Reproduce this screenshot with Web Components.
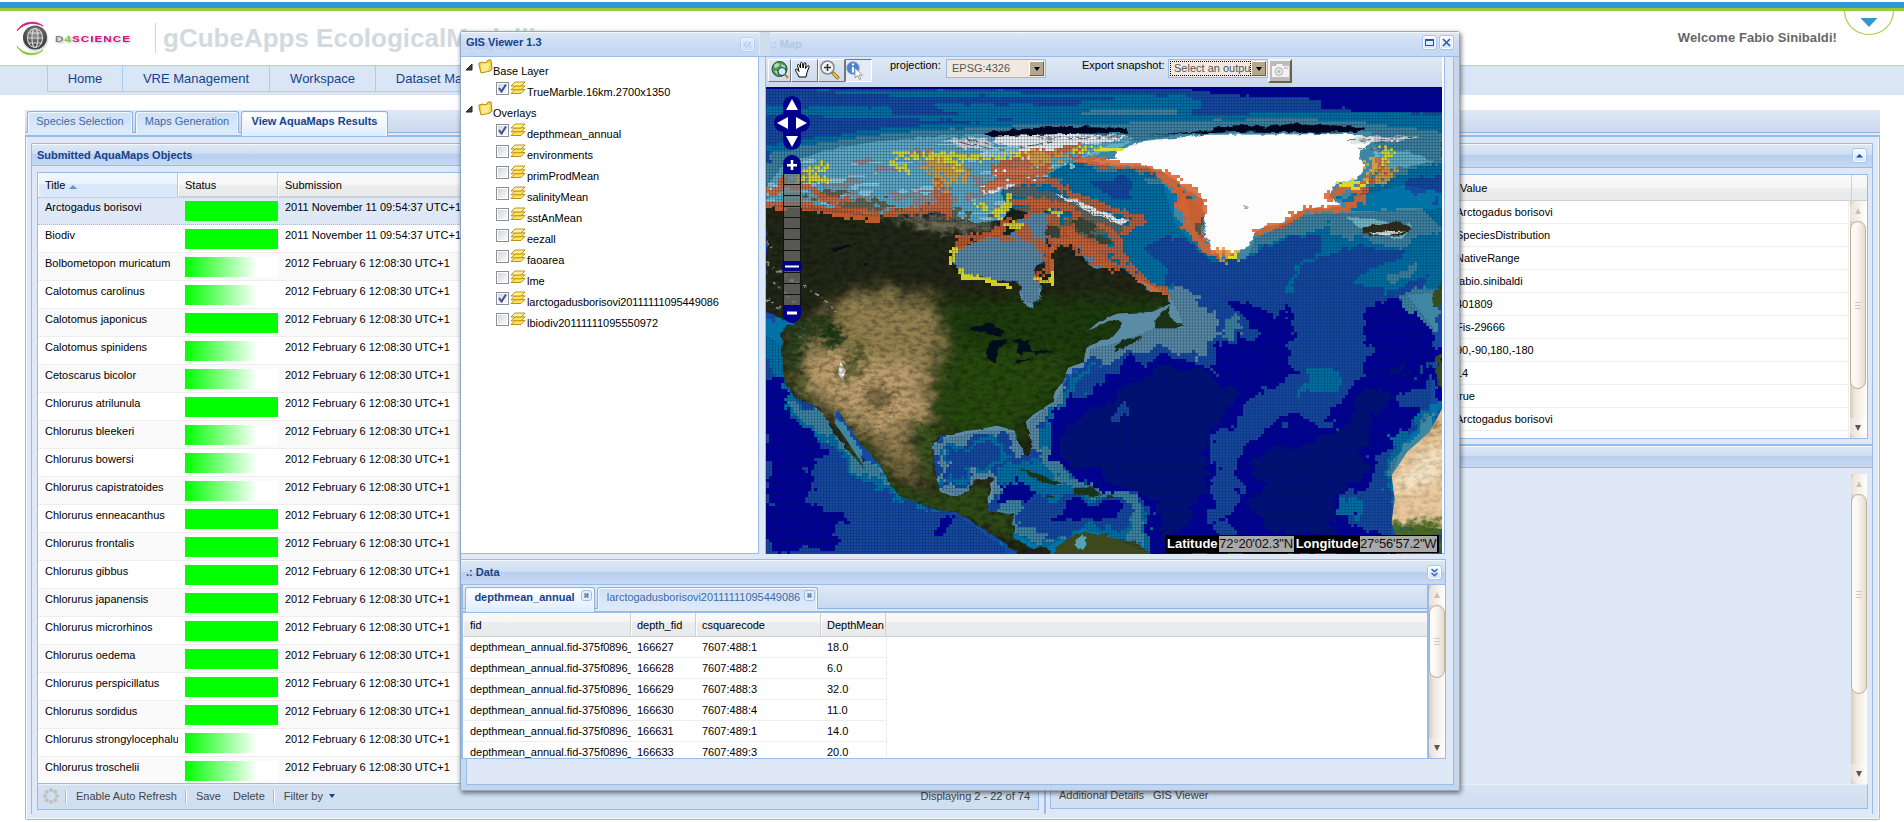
<!DOCTYPE html>
<html lang="en">
<head>
<meta charset="utf-8">
<title>gCubeApps EcologicalModelling</title>
<style>
html,body{margin:0;padding:0;background:#fff;font:11px "Liberation Sans",Arial,sans-serif;color:#000}
</style>
</head>
<body>
<eco-page></eco-page>
<script>
const BASE = `*{box-sizing:border-box}:host{display:block;box-sizing:border-box}`;
function define(name, css, html) {
  customElements.define(name, class extends HTMLElement {
    connectedCallback() {
      if (this.shadowRoot) return;
      const root = this.attachShadow({mode: 'open'});
      root.innerHTML = `<style>${BASE}${css}</style>${typeof html === 'function' ? html(this) : html}`;
    }
  });
}

/* ---------- small pieces ---------- */
define('x-scroll', `
:host{display:flex;flex-direction:column;width:16px;background:linear-gradient(90deg,#d9cdb9,#efe9df 35%,#fdfcfb);overflow:hidden;flex:none}
.b{height:20px;flex:none;border-radius:8px 8px 0 0;background:linear-gradient(90deg,#e9e1d6,#fff);color:#cfc2b0;display:flex;align-items:center;justify-content:center}
.b.d{margin-top:auto;border-radius:0 0 8px 8px;color:#5c5850}
.t{flex:none;border:1px solid #c0b098;border-radius:8px;background:linear-gradient(90deg,#fdfbf8,#fbf8f4 35%,#e6ddcf);display:flex;flex-direction:column;gap:2px;align-items:center;justify-content:center}
.t i{width:6px;height:1px;background:#d5c9b4}`,
el => `<div class="b"><svg width="6" height="6"><path d="M3 0L6 6H0z" fill="currentColor"/></svg></div>
<div class="t" style="height:${el.getAttribute('thumb')}px"><i></i><i></i><i></i></div>
<div class="b d"><svg width="6" height="6"><path d="M0 0H6L3 6z" fill="currentColor"/></svg></div>`);

define('x-tool', `
:host{width:15px;height:15px;border:1px solid #a5c6f0;border-radius:3px;background:linear-gradient(#fff,#e4f0ff 45%,#cfe4ff);box-shadow:inset 0 0 0 1px #fff;flex:none}
svg{display:block}`,
el => ({
  up: `<svg width="13" height="13"><path d="M3 8.5L6.5 5 10 8.5z" fill="#1b4aa0"/></svg>`,
  max: `<svg width="13" height="13"><rect x="2.5" y="3.5" width="8" height="6" fill="none" stroke="#2a52ae"/><path d="M2 4h9" stroke="#2a52ae" stroke-width="2"/></svg>`,
  close: `<svg width="13" height="13"><path d="M3 3l7 7M10 3l-7 7" stroke="#2a52ae" stroke-width="1.5"/></svg>`,
  down: `<svg width="13" height="13"><path d="M3.5 3l3 2.7 3-2.7M3.5 7l3 2.7 3-2.7" stroke="#3a6cb4" stroke-width="1.6" fill="none"/></svg>`,
  left: `<svg width="13" height="13"><path d="M6 3.5l-3 3 3 3M10 3.5l-3 3 3 3" stroke="#9dbbe4" stroke-width="1.4" fill="none"/></svg>`
})[el.getAttribute('kind')]);

define('x-tab', `
:host{height:22px;border:1px solid #8db2e3;border-bottom:0;border-radius:3px 3px 0 0;background:linear-gradient(#cfe0f6,#dceafb);color:#416aa3;display:flex;justify-content:center;line-height:18px;position:relative;box-shadow:inset 1px 1px #f2f8ff,inset -1px 0 #f2f8ff;flex:none}
:host([active]){background:linear-gradient(#fff,#f4f9ff 35%,#deecfd);color:#15428b;font-weight:bold;height:25px;margin-bottom:-3px}
svg{position:absolute;right:2px;top:2px}`,
el => `<slot></slot>${el.hasAttribute('closable') ? `<svg width="11" height="11"><rect x=".5" y=".5" width="10" height="10" rx="2.5" fill="#e6f0fc" stroke="#9dbbe4"/><path d="M3.500 3.500l4 4M7.500 3.500l-4 4" stroke="#6888b6" stroke-width="2"/></svg>` : ''}`);

define('x-header', `
:host{display:flex;align-items:center;padding:0 4px 0 5px;font-weight:bold;color:#15428b;background:linear-gradient(#dfe9f6,#cdddf1 49%,#b8cfee 50%,#c7d9f3);border-bottom:1px solid #99bbe8;box-shadow:inset 0 1px #f4f9ff;flex:none}
::slotted(x-tool){margin-left:auto}`, `<slot></slot>`);

/* ---------- top bar ---------- */
define('eco-top', `
:host{height:65px;border-top:2px solid #fff;display:flex;flex-direction:column}
.s{height:9px;background:linear-gradient(#3397cf 0 6px,#99cb33 6px);flex:none}
.r{display:flex;height:54px;position:relative}
.logo{margin:8px 0 0 14px;flex:none}
.t{margin:12px 0 0 0;border-left:1px solid #ccd6da;height:30px;padding-left:7px;font-weight:bold;font-size:26px;line-height:31px;color:#d1dadd}
.w{margin:19px 67px 0 auto;font-weight:bold;font-size:13px;line-height:16px;color:#666;letter-spacing:.08px}
.e{position:absolute;right:9px;top:0}`,
`<div class="s"></div><div class="r">
<svg class="logo" width="141" height="38" viewBox="14 19 141 38">
<defs><radialGradient id="g" cx=".5" cy=".35"><stop offset="0" stop-color="#999"/><stop offset="1" stop-color="#444"/></radialGradient></defs>
<circle cx="35.5" cy="39" r="12.800" fill="#aaa" opacity=".35"/><circle cx="35" cy="37.500" r="12" fill="url(#g)"/>
<g fill="none" stroke="#d8d8d8" stroke-width="1.100"><ellipse cx="35" cy="38" rx="7.500" ry="9.500"/><ellipse cx="35" cy="38" rx="3" ry="9.500"/><path d="M28 33h14M27 38h16M28 43h14"/></g>
<path d="M17 31c4-9 18-12 26-5-8-4-18-4-26 5z" fill="#d4147e" stroke="#d4147e" stroke-width=".8"/>
<path d="M17 46c6 9 20 9 26 4-6 6-20 8-26-4z" fill="#86c440" stroke="#86c440" stroke-width=".8"/>
<text x="55" y="41.700" font-size="9" font-weight="bold" textLength="76" lengthAdjust="spacingAndGlyphs" letter-spacing=".8" fill="#d4147e" style="filter:drop-shadow(1px 1px 1px #aaa)"><tspan fill="#888">D</tspan><tspan fill="#86c440">4</tspan>SCIENCE</text>
</svg>
<div class="t">gCubeApps EcologicalModelling</div>
<div class="w">Welcome Fabio Sinibaldi!</div>
<svg class="e" width="52" height="25"><path d="M1.500 0C2 13 12 23.500 26 23.500S50 13 50.500 0" fill="none" stroke="#a3d04a" stroke-width="1.200"/><path d="M17.500 7h17L26 16z" fill="#3397cf"/></svg>
</div>`);

define('eco-nav', `
:host{height:30px;background:#dae6f5;border-top:1px solid #a9cdf7;display:flex;padding-left:47px}
div{height:26px;border:solid #a9cdf7;border-width:0 0 1px 1px;font-size:13px;line-height:26px;text-align:center;color:#15428b}`,
`<div style="width:75px">Home</div><div style="width:147px">VRE Management</div><div style="width:106px">Workspace</div><div style="width:165px">Dataset Management</div>`);

/* ---------- submitted objects grid ---------- */
const OBJ = [['Arctogadus borisovi',1,1],['Biodiv',1,1],['Bolbometopon muricatum'],['Calotomus carolinus'],['Calotomus japonicus',1],['Calotomus spinidens'],['Cetoscarus bicolor'],['Chlorurus atrilunula',1],['Chlorurus bleekeri'],['Chlorurus bowersi'],['Chlorurus capistratoides'],['Chlorurus enneacanthus',1],['Chlorurus frontalis',1],['Chlorurus gibbus',1],['Chlorurus japanensis',1],['Chlorurus microrhinos',1],['Chlorurus oedema',1],['Chlorurus perspicillatus',1],['Chlorurus sordidus',1],['Chlorurus strongylocephalus'],['Chlorurus troschelii']];
define('eco-objects', `
:host{display:flex;flex-direction:column;border:1px solid #99bbe8;background:#fff;height:638px;overflow:hidden}
.h,.r{display:grid;grid-template-columns:140px 100px 1fr;flex:none}
.h{height:24px;background:linear-gradient(#f9f9f9,#f6f6f6 50%,#eceded 51%,#e8e9ea);border-bottom:1px solid #d0d0d0;line-height:24px}
.h span{padding-left:7px;border-right:1px solid #d0d0d0;box-shadow:inset 1px 0 #fff}
.h span:first-child{background:linear-gradient(#f0f7ff,#e9f3fe 45%,#d9e8fb 46%,#d9e8fb);border-color:#aaccf6}
.rows{height:586px;overflow:hidden;flex:none}
.r{height:28px;border-bottom:1px solid #ededed;background:#fff}
.r:nth-child(odd){background:#fafafa}
.r:first-child{background:#dfe8f6;border:1px dotted #a3bae9;border-right:0;border-left:0}
.r:first-child span{margin-top:-1px}
.r span{padding:3px 0 0 7px;line-height:14px;white-space:nowrap;overflow:hidden}
.r b{display:block;height:20px;width:93px;margin:4px 0 0 7px;background:linear-gradient(90deg,#0f0,#fff 78%)}
.r:first-child b{margin-top:3px}
.r b.f{background:#0f0}
.bar{height:26px;border-top:1px solid #99bbe8;background:linear-gradient(#d3e1f1,#cfdef0);display:flex;align-items:center;color:#444;padding:0 8px 1px 5px;box-shadow:inset 0 1px #e8f0fa;flex:none}
.bar i{width:2px;height:13px;border-left:1px solid #99bbe8;border-right:1px solid #fff}`,
`<div class="h"><span>Title <svg width="8" height="5" style="margin-left:1px"><path d="M0 5L4 1l4 4z" fill="#6593cf"/></svg></span><span>Status</span><span>Submission</span></div>
<div class="rows">${OBJ.map(o => `<div class="r"><span>${o[0]}</span><b class="${o[1] ? 'f' : ''}"></b><span>${o[2] ? '2011 November 11 09:54:37 UTC+1' : '2012 February 6 12:08:30 UTC+1'}</span></div>`).join('')}</div>
<div class="bar"><svg width="16" height="16">${[0,45,90,135,180,225,270,315].map(a => `<circle cx="8" cy="2" r="2" fill="#c4c0ba" transform="rotate(${a} 8 8)"/>`).join('')}</svg>
<i style="margin:0 9px 0 6px"></i>Enable Auto Refresh<i style="margin:0 9px 0 8px"></i>Save<span style="margin-left:12px">Delete</span><i style="margin:0 9px 0 8px"></i>Filter by<svg width="6" height="4" style="margin-left:6px"><path d="M0 0h6L3 4z" fill="#15428b"/></svg><span style="margin-left:auto">Displaying 2 - 22 of 74</span></div>`);

define('eco-details', `
:host{height:265px;border:1px solid #99bbe8;background:#fff;display:flex;flex-direction:column;overflow:hidden}
.h{height:26px;background:linear-gradient(#f9f9f9,#f6f6f6 50%,#eceded 51%,#e8e9ea);border-bottom:1px solid #d0d0d0;display:flex;line-height:27px;flex:none}
.h span{margin-left:409px;width:392px;border-right:1px solid #d0d0d0}
.b{display:flex;height:237px}
.rows{width:798px;margin-right:1px;overflow:hidden}
.rows div{height:23px;border:solid #ededed;border-width:0 1px 1px 0;padding-left:405px;line-height:22px}`,
`<div class="h"><span>Value</span></div><div class="b"><div class="rows">${['Arctogadus borisovi','SpeciesDistribution','NativeRange','fabio.sinibaldi','401809','Fis-29666','90,-90,180,-180','14','true','Arctogadus borisovi',''].map(t => `<div>${t}</div>`).join('')}</div><x-scroll thumb="168" style="height:237px"></x-scroll></div>`);

/* ---------- map ---------- */
/* Map units: 2.24 per px across, 3 per px down. Sea depth classes are sampled on a 3px cell grid. */
const P = s => s.trim().split(/\s+/).map(p => p.split(',').map(Number));
const SEA = [
 ['#1549a2','13,20 1528,20 1528,1418 13,1418'],
 ['#0072a6','13,78 300,76 300,100 560,104 520,120 13,100'],
 ['#0072a6','13,24 560,26 590,34 840,38 960,44 985,60 970,80 960,104 700,110 640,118 420,92 390,60 380,50 200,32'],
 ['#1549a2','13,38 390,44 560,52 720,56 700,70 420,66 13,70'],
 ['#1549a2','430,42 600,44 760,50 850,56 600,58'],
 ['#3f86a2','700,98 800,78 950,80 940,98 730,108'],
 ['#0072a6','1030,110 1120,92 1430,90 1528,104 1528,180 1030,150'],
 ['#1549a2','1000,60 1528,98 1528,78 1000,44'],
 ['#00009a','960,20 1528,20 1528,92 1325,92 1320,80 1255,80 1250,55 1225,50 1080,42 980,30'],
 ['#0072a6','13,190 120,170 270,140 430,125 780,98 1200,104 1450,108 1528,140 1528,620 1400,640 1340,600 1190,630 1180,560 1250,450 1150,500 1080,560 980,520 900,470 860,500 900,590 960,650 780,600 640,420 13,400'],
 ['#3f86a2','13,215 150,180 330,150 520,135 850,120 1200,110 1380,125 1528,155 1528,230 1400,300 1300,340 900,260 640,300 13,400'],
 ['#0072a6','640,235 760,260 870,270 900,320 930,420 900,480 860,500 830,400 740,320 620,270'],
 ['#1549a2','740,290 800,285 830,320 830,355 780,345'],
 ['#1549a2','1430,300 1528,262 1528,335 1440,325'],
 ['#1549a2','1490,355 1510,360 1500,378'],
 ['#3f86a2','850,275 920,340 950,420 980,490 1060,540 1100,520 1120,480 1250,440 1330,360 1280,340 1000,300'],
 ['#1549a2','870,490 950,470 980,500 1030,540 1100,530 1120,490 1250,445 1250,500 1190,590 1190,640 1100,650 960,650 900,580'],
 ['#3f86a2','1290,390 1480,385 1528,430 1450,490 1330,480 1270,440'],
 ['#1549a2','1250,520 1440,490 1400,550 1340,600 1200,640 1200,600'],
 ['#3f86a2','1400,590 1460,550 1460,575 1420,605'],
 ['#1549a2','1340,610 1400,640 1500,580 1490,620 1440,660 1350,650'],
 ['#3f86a2','1450,640 1528,610 1528,750 1490,720 1445,670'],
 ['#5b8ca6','640,420 700,470 850,590 920,620 960,640 1000,700 1025,760 1000,820 950,800 880,790 800,830 730,850 690,890 670,950 640,1000 610,1030 640,1120 570,1120 560,1060 540,1080 500,1055 440,1090 405,1105 420,1220 450,1200 480,1155 530,1145 540,1190 500,1270 420,1250 385,1140 390,1060 640,880 720,760'],
 ['#3f86a2','1025,740 1060,715 1090,745 1040,770'],
 ['#0072a6','640,1000 700,900 760,850 740,870 690,950 660,1030 655,1120 700,1170 760,1225 840,1235 880,1290 890,1418 560,1418 570,1300 520,1230 560,1150 640,1140 615,1060'],
 ['#3f86a2','640,1090 700,1180 850,1240 870,1310 860,1400 820,1380 830,1280 780,1250 690,1210 630,1150'],
 ['#3f86a2','520,1240 560,1250 620,1270 600,1330 660,1370 620,1400 570,1350'],
 ['#0072a6','410,1090 460,1075 530,1070 560,1130 540,1160 480,1160 440,1200 420,1210 400,1130'],
 ['#1549a2','415,1105 470,1082 520,1085 550,1125 500,1150 450,1165 430,1200 405,1190'],
 ['#1549a2','570,1240 800,1245 830,1300 800,1360 700,1340 640,1380 600,1330'],
 ['#00009a','540,1190 600,1190 640,1220 600,1260 540,1250'],
 ['#00009a','690,1260 800,1260 800,1330 740,1330 640,1310'],
 ['#0072a6','13,690 75,720 60,900 130,980 200,1110 270,1150 320,1240 420,1290 370,1280 280,1230 210,1160 120,1060 60,960 30,850 13,760'],
 ['#3f86a2','60,930 130,980 165,1000 240,1130 300,1210 240,1180 160,1090 100,1010'],
 ['#00009a','13,880 50,890 70,1000 120,1060 140,1150 100,1200 110,1260 210,1320 160,1370 180,1400 13,1418'],
 ['#00009a','380,1360 400,1320 440,1310 430,1350 390,1380'],
 ['#00009a','650,1000 690,940 760,890 830,830 950,812 1030,860 1040,780 1120,740 1035,660 1050,645 1110,665 1215,710 1215,750 1190,790 1190,880 1120,925 1060,1010 1030,1080 1010,1200 1010,1300 1040,1400 1010,1418 870,1418 890,1300 850,1230 760,1220 660,1130'],
 ['#00107c','700,1000 780,960 830,880 900,850 1030,870 1060,940 1030,1010 1020,1100 990,1200 980,1340 920,1370 880,1250 820,1210 690,1130 680,1070'],
 ['#00009a','1330,740 1350,680 1420,655 1500,720 1528,745 1528,980 1450,1030 1440,1070 1370,1130 1380,1200 1300,1240 1340,1320 1410,1340 1415,1418 1100,1418 1040,1330 1080,1230 1075,1100 1140,1040 1200,1000 1280,1030 1290,950 1330,900 1380,800'],
 ['#00107c','1120,1110 1240,1060 1330,1000 1380,900 1440,820 1440,900 1380,1010 1350,1180 1290,1240 1300,1360 1180,1360 1100,1290'],
 ['#1549a2','1440,870 1500,850 1510,980 1440,980'],
 ['#00009a','1350,860 1490,870 1500,900 1420,920 1350,900'],
 ['#0072a6','1190,940 1210,880 1260,845 1310,890 1300,920 1220,930'],
 ['#1549a2','790,1010 800,980 815,985 820,1010'],
 ['#0072a6','1528,930 1470,1020 1420,1070 1400,1180 1410,1280 1400,1330 1440,1330 1528,1060'],
 ['#3f86a2','1528,980 1480,1030 1440,1090 1410,1170 1420,1320 1450,1250'],
 ['#0072a6','1300,1250 1330,1250 1340,1300 1310,1290']
].map(([c, s]) => [c, P(s)]);
const inside = (x, y, p) => { let r = false; for (let i = 0, j = p.length - 1; i < p.length; j = i++) { const [a, b] = p[i], [c, d] = p[j]; if ((b > y) !== (d > y) && x < (c - a) * (y - b) / (d - b) + a) r = !r; } return r; };
const hash = (x, y) => { const s = Math.sin(x * 127.1 + y * 311.7) * 43758.5453; return s - Math.floor(s); };
const noise = (x, y) => { const i = Math.floor(x), j = Math.floor(y), u = x - i, v = y - j, s = u * u * (3 - 2 * u), t = v * v * (3 - 2 * v); return (hash(i, j) * (1 - s) + hash(i + 1, j) * s) * (1 - t) + (hash(i, j + 1) * (1 - s) + hash(i + 1, j + 1) * s) * t - .5; };
const CW = 6.72, CH = 9;
function seaCells() {
  const out = {};
  for (let r = 0, y = 20; y < 1418; r++, y += CH) {
    let run = null, start = 13;
    for (let c = 0, x = 13; x < 1530; c++, x += CW) {
      const top = y < 230 ? .12 : y < 640 ? .6 : 1, wide = y < 640 ? .6 : 1;
      const jx = x + 3 + (noise(c / 6, r / 6) * 44 + noise(c / 1.8 + 50, r / 1.8) * 22) * wide, jy = y + 4 + (noise(c / 6 + 90, r / 6) * 48 + noise(c / 1.8, r / 1.8 + 70) * 22) * top;
      let col = SEA[0][0];
      for (let i = SEA.length - 1; i > 0; i--) if (inside(jx, jy, SEA[i][1])) { col = SEA[i][0]; break; }
      if (col !== run) { if (run) (out[run] ||= []).push(`M${start.toFixed(1)} ${y}H${x.toFixed(1)}v9.300H${start.toFixed(1)}z`); run = col; start = x; }
    }
    (out[run] ||= []).push(`M${start.toFixed(1)} ${y}H1530v9.300H${start.toFixed(1)}z`);
  }
  return Object.entries(out).map(([c, d]) => `<path fill="${c}" d="${d.join('')}"/>`).join('');
}
/* Species distribution cells strewn along coast lines. */
function strew(lines, spread, density, seed) {
  const set = new Set();
  lines.forEach((l, k) => { const p = P(l);
    for (let i = 1; i < p.length; i++) { const [a, b] = p[i - 1], [c, d] = p[i], n = Math.ceil(Math.hypot((c - a) / CW, (d - b) / CH)) * density;
      for (let t = 0; t < n; t++) { const f = t / n, h = seed + k * 31 + i * 7;
        const x = a + (c - a) * f + (hash(t, h) + hash(t + 9, h) - 1) * spread, y = b + (d - b) * f + (hash(h, t) + hash(h, t + 5) - 1) * spread;
        set.add(Math.round((x - 13) / CW) + ',' + Math.round((y - 20) / CH)); } } });
  return [...set].map(s => { const [c, r] = s.split(','); return `M${(13 + c * CW).toFixed(1)} ${20 + r * 9}h6.800v9.100h-6.800z`; }).join('');
}
function blotches(poly, fx, fy, thr, seed, k = 1) {
  const p = P(poly), d = [], w = 3.36 * k, h = 4.5 * k;
  for (let r = 0, y = 20; y < 700; r++, y += h) for (let c = 0, x = 13; x < 1528; c++, x += w)
    if (noise(c / fx + seed, r / fy + seed) + noise(c / fx * 2.7, r / fy * 2.7 + seed) * .6 > thr && inside(x + noise(c / 4, r / 4) * 30, y + noise(r / 4, c / 4) * 30, p)) d.push(`M${x.toFixed(1)} ${y}h${w + .2}v${h + .2}h-${w + .2}z`);
  return d.join('');
}
const ARCTIC = '13,315 52,250 150,205 261,180 418,163 493,157 700,165 840,170 800,200 700,240 640,280 560,300 540,330 560,400 500,430 400,405 250,400 160,380 13,370';
const NA = 'M13 372L80 372 160 380 250 400 400 395 480 425 540 415 560 380 600 390 640 380 660 440 640 470 650 495 700 480 735 545 760 560 810 555 850 600 875 630 915 632 915 668 880 690 800 695 770 708 728 752 780 718 805 715 803 745 790 765 750 780 730 800 725 840 685 860 685 885 660 930 655 960 610 1000 595 1020 605 1070 610 1115 598 1122 580 1085 570 1045 530 1030 495 1040 450 1050 400 1065 385 1090 388 1160 405 1230 440 1243 470 1225 480 1195 520 1188 510 1250 510 1285 565 1295 570 1370 610 1395 640 1395 650 1418 580 1418 550 1385 500 1340 440 1290 390 1280 310 1240 290 1200 270 1150 235 1100 200 1040 175 985 165 1000 195 1060 225 1120 235 1160 200 1110 155 1030 130 975 80 950 55 900 48 830 50 740 75 725 13 690Z';
const PLAINS = 'M175 640L300 625 395 660 415 780 385 900 380 1010 340 1060 360 1180 390 1230 330 1200 210 1040 130 960 75 900 90 740 150 720z';
define('eco-map', `
:host{height:467px;width:676px;position:relative;background:#1549a2;overflow:hidden;border-top:2px solid #00007e;flex:none}
svg{position:absolute;left:0;top:-1px;display:block}
.c{position:absolute;right:3px;bottom:1px;width:274px;height:18px;background:#000;display:grid;grid-template-columns:52px 75px 65px 77px;justify-content:space-between;padding:1px 2px 1px;font-size:13px;line-height:16px;color:#fff;white-space:nowrap}
.c span{background:#a9a9a9;color:#111;letter-spacing:-.2px}.c b+span+b{padding-left:1px}`,
() => `<svg width="676" height="467" viewBox="13 20 1515 1398" preserveAspectRatio="none">
<defs>
<pattern id="grid" width="6.72" height="9" patternUnits="userSpaceOnUse" x="13" y="20"><path d="M0 0h2.240v9H0z" fill="#001030" opacity=".24"/><path d="M0 0h6.720v3H0z" fill="#001030" opacity=".24"/></pattern>
<filter id="rough" x="-5%" y="-5%" width="110%" height="110%"><feTurbulence type="fractalNoise" baseFrequency=".05" numOctaves="3" seed="4"/><feDisplacementMap in="SourceGraphic" scale="18" xChannelSelector="R" yChannelSelector="G"/></filter>
<filter id="blur" x="-50%" y="-50%" width="200%" height="200%"><feGaussianBlur stdDeviation="24" result="b"/><feTurbulence type="fractalNoise" baseFrequency=".02" numOctaves="4" seed="2" result="n"/><feDisplacementMap in="b" in2="n" scale="70" xChannelSelector="R" yChannelSelector="G"/></filter>
<filter id="blur2" x="-30%" y="-30%" width="160%" height="160%"><feGaussianBlur stdDeviation="9" result="b"/><feTurbulence type="fractalNoise" baseFrequency=".06" numOctaves="4" seed="9" result="n"/><feDisplacementMap in="b" in2="n" scale="60" xChannelSelector="R" yChannelSelector="G"/></filter>
<filter id="tex" x="0" y="0" width="100%" height="100%"><feTurbulence type="fractalNoise" baseFrequency=".06 .08" numOctaves="5" seed="12"/><feColorMatrix values="0 0 0 0 0  0 0 0 0 0  0 0 0 0 0  2.500 0 0 0 -1"/></filter>
<filter id="ridge" x="0" y="0" width="100%" height="100%"><feTurbulence type="turbulence" baseFrequency=".03 .035" numOctaves="4" seed="31"/><feColorMatrix values="0 0 0 0 .2  0 0 0 0 .16  0 0 0 0 .06  0 -5 0 0 1.100" result="t"/><feComposite in="t" in2="SourceGraphic" operator="in"/></filter>
<clipPath id="na"><path d="${NA}"/></clipPath>
<clipPath id="af"><path d="M1528 980L1500 1050 1450 1110 1415 1180 1422 1250 1415 1320 1440 1418H1528z"/></clipPath>
</defs>
<g shape-rendering="crispEdges">${seaCells()}</g>
<g filter="url(#rough)"><path d="${ARCTIC.split(' ').map((p, i) => (i ? 'L' : 'M') + p).join('')}z" fill="#5fadc8"/>
<path d="M1370 200l80 10 60 30-60 15-60 10z" fill="#64b4c8"/><path d="M1310 400l40 10 110 20-15 40-40-5-50-10z" fill="#7cc0cc"/></g>
<g shape-rendering="crispEdges">
<path fill="#8f8f94" d="${blotches('100,280 240,230 330,200 420,200 560,230 640,250 560,330 520,420 300,400 100,350', 13, 6, .12, 3)}"/>
<path fill="#8fd0e0" d="${blotches(ARCTIC, 22, 4, .16, 15)}"/>
<path fill="#d4dcdf" d="${blotches('420,165 560,165 640,200 520,220', 12, 4, .1, 25)}"/>
<path fill="#66694f" d="${blotches('80,335 160,325 300,360 560,390 640,340 800,400 820,440 700,470 640,400 520,440 250,405 100,375', 14, 6, -.02, 8)}"/>
</g>
<g filter="url(#rough)"><path d="${NA}" fill="#222812"/></g>
<g clip-path="url(#na)">
<path d="M260 390l270 20-20 40-120 0z" fill="#6a6a55" filter="url(#blur2)"/>
<path d="M400 660l520-20v200l-340 220-210-40z" fill="#1e3a10" filter="url(#blur)"/>
<path d="M430 800l260 20-20 100-120 140-150 0z" fill="#28490f" filter="url(#blur)"/>
<path d="${PLAINS}" fill="#938050" filter="url(#blur)"/>
<path d="M110 800l80 10 70 30 90 10 20 140-60 60-100-40-80-70z" fill="#c0a070" filter="url(#blur)"/>
<path d="M70 730L85 700 130 720 90 830 70 870 50 830z" fill="#28401a" filter="url(#blur2)"/>
<path d="M110 690l70 40 10 60-40 20z" fill="#203814" filter="url(#blur2)"/>
<path d="M220 770l20 40-20 60-30 40-10-50z" fill="#4c5428" filter="url(#blur2)" opacity=".8"/>
<path d="M210 1050l30 40 60 110 80 40 130-40v80l60 20v80l-70-50-220-80-80-140z" fill="#2d4a14" filter="url(#blur2)"/>
<path d="M350 1030l50 20-15 100 20 80-40-60z" fill="#3a5a1a" filter="url(#blur2)"/>
<path d="M240 900l50 20 10 50-60 20z" fill="#6b5c38" filter="url(#blur2)" opacity=".8"/>
<path d="M180 840l12 25-8 30-10-20z" fill="#f0ece6"/>
<path d="M60 870l30 20 40 70-20 10-40-50z" fill="#56602c" filter="url(#blur2)"/>
<g fill="none" stroke="#d8dcd8" stroke-width="6" stroke-dasharray="9 10 4 13" filter="url(#rough)" opacity=".6"><path d="M13 480l20 30M15 540l50 50 70 50 35 50M30 600l60 80M13 650l40 40"/></g>
<path d="M90 720l110 20 60 120 60 60 20 180 40 130-60-40-110-160-100-80-30-120z" filter="url(#ridge)" opacity=".75"/>
<rect x="13" y="360" width="910" height="1060" filter="url(#tex)" opacity=".3"/>
</g>
<path d="M170 1008l22 30 36 90 6 28-10-20-34-70-24-44z" fill="#3f86a2"/>
<g filter="url(#rough)">
<path d="M470 742l40-22 45 35-20 8-30-8zM515 780l30-10 10 10-20 15-5 45-12-2-10-25zM560 770l40 5 10 25 0 8-20-3 0 15-15-10 0-25zM570 838l50-12-40 16zM612 808l48-2-44 14zM160 500l60-15-50 25zM230 545l20 0-12 5z" fill="#06091c"/>
<path d="M895 700l20-28 0 30 30 25-10 12-50 0 0-20zM795 790l30-20 35-5-40 30-25 12z" fill="#1f3312"/>
<path d="M1345 440l30-12 60-8 25 20-20 20-50 5-40-10z" fill="#352d14"/><path d="M1365 456l30-6 50-4-40 16z" fill="#e8eef0"/>
<path d="M580 1160l40 10 55 38-10 4-30-12-50-35zM705 1220l30-8 30 25-20 8-40-10zM775 1238l18 2v6l-18-1zM640 1240l15 2v5l-15-2z" fill="#1e3a12"/>
<path d="M650 1418l30-40 40-30 50 10 70 20 40 40z" fill="#3c4a1c"/><path d="M705 1380l18-25 4 30-10 20z" fill="#58a0b4"/>
<path d="M1505 640l23-30v60l-20 0zM1518 820l10-10v110l-14-30z" fill="#34501a"/>
</g>
<g clip-path="url(#af)"><path d="M1528 960L1400 1100 1400 1330 1528 1340z" fill="#e8c89c"/><path d="M1430 1180l98-90v90l-90 60z" fill="#f4e2c2" filter="url(#blur2)"/><path d="M1400 1325l128-10v120h-128z" fill="#4c6a24" filter="url(#blur2)"/><path d="M1500 1020l28-20v40l-40 20z" fill="#a8804c" filter="url(#blur2)"/><rect x="1400" y="960" width="130" height="460" filter="url(#tex)" opacity=".15"/></g>
<path d="M600 400l30-15 28 20-18 35 0 50-5 30 10 15-35 25 15 50-60-10-110-20-25-40 10-40 70-35 50-5 20-20z" fill="#5b8ca6" filter="url(#rough)"/><path d="M580 600h48l-4 45-12 35-26-20z" fill="#5b8ca6" filter="url(#rough)"/>
<g shape-rendering="crispEdges">
<path fill="#404b35" d="${blotches('640,400 700,380 760,430 810,470 790,500 720,480 650,470', 8, 6, -.05, 5)}"/>
</g>
<g filter="url(#rough)">
<path d="M795 214L850 180 1000 160 1330 158 1375 174 1345 215 1352 260 1340 290 1290 308 1272 345 1305 374 1215 385 1170 425 1108 448 1096 490 1062 520 1015 514 1000 470 994 400 990 350 945 315 905 275 862 252 790 250 740 236 800 232z" fill="#fdfdfd"/>
<path d="M530 160l170-2 130 6-40 18-100 10-60 36-70 4 20-34-60-14zM530 262l100 2-20 14-90 0zM490 320l40-26 60 4-50 32-40 6zM560 290l90 0-20 12z" fill="#f4f6f6"/>
<path d="M530 325l70-15 60 25 80 50 90 50-30 30-80-60-110-50z" fill="#6b6a5c" opacity=".75"/>
<path d="M660 336l44 14 90 54 34 12-16 18-80-46z" fill="#f4f6f6"/>
<path d="M500 158l50-12 110-10 160 4 6 14-160 4-140 8zM866 160l80-6 70-8v-8l70-8 50 6 60-10 120 8 36 8 2 8-100 4-160-4-110 6-60 2z" fill="#04061a"/>
<path d="M935 310l25 30 32 50 0 60 5 40-25-45-15-60-20-40z" fill="#5a5240"/>
<path d="M1330 165l160 0-60 14-100 4zM410 178l90-6 30 30-60-4z" fill="#d8e0e2"/>
</g>
<g fill="none" stroke="#555c60" stroke-width="3" stroke-dasharray="14 9 30 13" filter="url(#rough)"><path d="M420 172l80 24M440 166l90 26M620 170l200-4M1320 178l160-12M1340 200l60 10M470 190l90 20M580 200l80-22M1085 376h12M670 345l120 70"/></g>
<g shape-rendering="crispEdges">
<path fill="#d0602f" opacity=".86" d="${blotches('567,345 672,355 709,395 694,445 784,485 790,560 739,555 717,515 660,485 635,515 600,480 523,475 523,435 597,385', 5, 4, -.12, 41, 2)}"/>
<path fill="#d9622f" opacity=".86" d="${blotches('925,300 985,330 990,410 955,430 930,350', 5, 4, -.2, 44, 2)}"/>
<path fill="#d9622f" opacity=".86" d="${strew(['13,368 100,370 160,385 220,385','160,385 270,392 330,385 360,390','180,395 260,410','50,290 30,330 15,320','50,310 100,312 135,345 200,355','360,375 410,370','540,240 600,215 640,210 720,195','520,252 630,245 640,262 540,275','525,270 625,272','700,220 740,240 860,252','740,225 780,240','530,300 650,295 690,330','490,320 530,300','600,355 690,370 710,400','560,360 630,350','690,330 760,370 850,410 810,450','760,430 800,470 800,520 830,560 870,610 910,628','800,470 790,520','440,465 500,460 550,430 540,410','435,500 470,465','640,470 720,490 760,540 800,555','640,495 645,550 610,590','680,440 730,490 800,500','860,255 900,280 930,320 940,350 985,360','930,350 960,410 950,430 975,460 1000,510 1050,515','900,270 930,300','1105,450 1170,425 1215,385 1300,378 1350,350','1265,350 1300,315 1350,320 1340,350','1380,230 1400,270 1350,300','395,290 400,380','415,320 420,400'], 12, 6, 3)}"/>
<path fill="#5b8ca6" d="M602 395h34v20h8v16h-20v24h-18v-28h-30v-14h26z"/>
<path fill="#e2a13a" opacity=".85" d="${strew(['370,240 440,250 440,290','390,260 420,300','1370,250 1400,260 1370,290','600,225 660,220','1040,515 1060,520'], 34, 7, 60)}"/>
<path fill="#e3e12a" opacity=".9" d="${strew(['300,215 430,215 510,230 600,212','380,225 440,235 440,270','95,262 145,258 140,240','75,288 155,288','290,240 330,260','480,360 520,390 550,380 550,330','530,400 545,370','545,430 580,430 560,410','700,200 800,200','1390,195 1410,215 1390,240','1290,305 1350,310','1320,290 1330,320','650,380 670,400','1055,518 1065,522'], 11, 2.5, 17)}${strew(['425,540 428,510 434,495','446,562 450,585 475,582 500,588 530,602 560,610','610,585 650,600 652,575'], 5, 3, 5)}"/>
</g>
<path d="M13 20H1528V330L1440 310 1340 345 1390 240 1370 150 1000 150 780 190 700 240 790 256 870 260 900 300 930 430 1000 520 1090 535 1110 470 1220 400 1528 380V630L1450 640 1510 740V820L1500 1000 1440 1090 1415 1180 1415 1418H880L780 1360 720 1340 650 1390 620 1390 575 1360 570 1290 515 1285 525 1185 480 1190 465 1230 440 1240 408 1225 390 1150 390 1090 410 1070 500 1045 570 1050 600 1125 612 1115 600 1020 660 960 690 885 730 850 740 800 810 780 890 735 950 740 940 700 915 640 860 600 740 550 650 490 650 610 625 620 625 670 590 660 580 610 445 575 425 530 440 470 480 430 250 405 13 372ZM13 760L48 790 55 900 130 980 200 1110 260 1150 310 1245 440 1295 550 1400 540 1418H13Z" fill="url(#grid)" shape-rendering="crispEdges"/>
</svg>
<svg width="60" height="250" viewBox="766 87 60 250">
<g fill="#00008b"><rect x="783" y="95" width="18" height="54" rx="9"/><rect x="774" y="113" width="36" height="18" rx="9"/><path d="M783 172v-9a9 9 0 0118 0v9zM783 304h18v9a9 9 0 01-18 0z"/></g>
<g fill="#fff"><path d="M792 98l6 11h-12zM792 146l6-11h-12zM777 122l11-6v12zM807 122l-11-6v12zM787 163h10v2.600h-10zM790.700 159h2.600v10h-2.600zM787 310.500h10v3h-10z"/></g>
<g fill="#737373" fill-opacity=".68" stroke="#111" stroke-width="1">${Array.from({length: 12}, (_, i) => `<rect x="783.500" y="${172.500 + i * 11}" width="17" height="11"/>`).join('')}</g>
<rect x="782" y="261" width="20" height="9" rx="3" fill="#00008b"/><path d="M785 265.500h14" stroke="#fff" stroke-width="2"/>
</svg>
<div class="c"><b>Latitude</b><span>72°20'02.3"N</span><b>Longitude</b><span>27°56'57.2"W</span></div>`);

/* ---------- viewer window ---------- */
define('x-combo', `
:host{display:flex;width:100px;height:19px;border:1px solid #99bbe8;background:#efe9e1;font-size:11px;color:#555;align-items:center;padding:1px;flex:none}
span{flex:1;overflow:hidden;white-space:nowrap;padding-left:4px;height:15px;line-height:15px}
:host([focus]) span{border:1px dotted #000;line-height:13px;padding-left:3px}
i{width:15px;height:15px;background:#b5a68f;border:1px solid;border-color:#fff #6b6050 #6b6050 #fff;display:flex;align-items:center;justify-content:center;flex:none}`,
`<span><slot></slot></span><i><svg width="6" height="4"><path d="M0 0h6L3 4z"/></svg></i>`);

const LAYER = `<svg class="l" width="16" height="14"><g fill="#fbe35e" stroke="#b8860b" stroke-width=".9"><path d="M1 12.500l4-4h10l-4 4z"/><path d="M1 8.800l4-4h10l-4 4z"/><path d="M1 5l4-4h10l-4 4z" fill="#fdf0a0"/></g></svg>`;
define('eco-layers', `
:host{width:298px;height:497px;background:#fff;padding-top:2px;border-bottom:1px solid #99bbe8;border-right:1px solid #99bbe8}
div{height:21px;display:flex;align-items:flex-start;padding-left:5px}
.k{padding-left:35px}
span{line-height:13px;margin-top:6px}
.k span{margin-left:1px}
svg{flex:none}
.a{margin:5px 5px 0 0}.f{margin-top:0}
.c{width:13px;height:13px;border:1px solid #8a8f94;background:linear-gradient(135deg,#cdd2d8,#fff);box-shadow:inset 0 0 0 1px #fff;flex:none;margin-top:2px}
.c svg{display:block}.l{margin:1px 0 0 1px}
.w{letter-spacing:-.08px}`,
() => {
  const g = t => `<div><svg class="a" width="7" height="7"><path d="M6 0v6H0z" fill="#444" stroke="#222"/></svg><svg class="f" width="15" height="15"><path d="M1 4l4-1 1 1 3-1 1-2 3 0 1 9-2 2-9 2-2-8z" fill="#f7d84a" stroke="#b8860b"/><path d="M4 5l8-1-2 8-7 1z" fill="#fdeb8c"/></svg><span>${t}</span></div>`;
  const k = (t, on) => `<div class="k"><i class="c">${on ? '<svg width="11" height="11"><path d="M2 5l2.500 3.500L9 1.500" stroke="#3a4f9c" stroke-width="2" fill="none"/></svg>' : ''}</i>${LAYER}<span class="${t.length > 30 ? 'w' : ''}">${t}</span></div>`;
  return g('Base Layer') + k('TrueMarble.16km.2700x1350', 1) + g('Overlays') + k('depthmean_annual', 1) + ['environments','primProdMean','salinityMean','sstAnMean','eezall','faoarea','lme'].map(t => k(t)).join('') + k('larctogadusborisovi20111111095449086', 1) + k('lbiodiv20111111095550972');
});

define('eco-maptools', `
:host{height:30px;width:676px;background:linear-gradient(#dfe9f6,#c9d8ea);display:flex;padding:2px 0 0 2px;flex:none}
i{height:23px;border:1px solid;border-color:#fff #777 #777 #fff;display:flex;align-items:center;justify-content:center;flex:none}
i.p{border-color:#777 #fff #fff #777;background:#e4ebf4}
i svg{margin:-2px 0 0 -3px}
i.p svg{margin-left:-8px}
span{line-height:13px}
.cam{width:24px;height:24px;border:2px solid;border-color:#f6f3ee #6b6050 #6b6050 #f6f3ee;background:#bcbcbc;display:flex;align-items:center;justify-content:center;flex:none}`,
`<i style="width:23px"><svg width="18" height="18" style="margin-left:0"><circle cx="8.500" cy="8" r="7.500" fill="#4f9a5a" stroke="#1d4a34"/><path d="M3 4l3-2 3 1-2 3-3 1zM10 3l4 2 0 3-3-1zM3 10l3 0 1 4z" fill="#b5dcb8"/><circle cx="11" cy="10.500" r="4" fill="#c8eef6" stroke="#1d3a44"/><path d="M14 13.500l3 3.500" stroke="#b8860b" stroke-width="2"/></svg></i>
<i style="width:27px"><svg width="18" height="18"><path d="M5 16C4 13 1 10 1.500 8.500c1-1 2.500.500 3.500 2L3.500 4.500c0-1.500 1.500-1.500 2 0L6.500 7 6.500 2.500c0-1.500 1.800-1.500 2 0L9 7l1-4.500c.500-1.300 2-1 2 .500L11.500 7.500 13.500 5c1-1 2 0 1.500 1l-2 5.500-1 4.500z" fill="#fff" stroke="#000"/></svg></i>
<i style="width:27px"><svg width="20" height="20"><circle cx="7.500" cy="7.500" r="6.500" fill="#f2f2f2" stroke="#888" stroke-width="1.600"/><path d="M7.500 4v7M4 7.500h7" stroke="#333" stroke-width="1.600"/><path d="M12.500 12.500l6 6" stroke="#8b6a10" stroke-width="3.600"/><path d="M13 13l5 5" stroke="#f2c230" stroke-width="2"/></svg></i>
<i class="p" style="width:27px"><svg width="20" height="20"><circle cx="8" cy="8" r="6.500" fill="#4a84cc" stroke="#a8c6ec"/><path d="M8 3.500v2M8 7v5.500" stroke="#fff" stroke-width="2.200"/><path d="M10 8v10l2.500-2.500 2 4 1.500-.800-2-3.700h3.500z" fill="#fff" stroke="#888" stroke-width=".8"/></svg></i>
<span style="margin-left:18px;width:56px">projection:</span><x-combo>EPSG:4326</x-combo>
<span style="margin-left:36px;width:86px">Export snapshot:</span><x-combo focus>Select an output format</x-combo>
<div class="cam"><svg width="17" height="14"><path d="M0 2h4l1-2h5l1 2h6v11H0z" fill="#f2f2f2"/><circle cx="7" cy="7.500" r="3.800" fill="none" stroke="#a8a8a8"/><circle cx="7" cy="7.500" r="1.800" fill="#bbb"/><path d="M12 4h4" stroke="#aaa"/></svg></div>`);

define('eco-data', `
:host{width:985px;height:200px;border:1px solid #99bbe8;border-left:0;display:flex;flex-direction:column;background:#fff}
.m{display:flex;height:173px}
.l{flex:1;border-right:2px solid #99bbe8;display:flex;flex-direction:column;overflow:hidden;border-left:2px solid #99bbe8}
.strip{height:24px;border-bottom:1px solid #8db2e3;background:linear-gradient(#dfe9f6,#c9d9ee);display:flex;gap:2px;padding:2px 0 0 2px;flex:none}
.g{height:4px;background:#dfe8f6;border-bottom:2px solid #99bbe8;flex:none}
.h,.r{display:grid;grid-template-columns:168px 65px 125px 65px;flex:none}
.h{height:24px;background:linear-gradient(#f9f9f9,#f6f6f6 40%,#eceded 41%,#e8e9ea);border-bottom:1px solid #d0d0d0;line-height:25px}
span{padding-left:6px;white-space:nowrap;overflow:hidden}
span:first-child{padding-left:7px}
.h span{border-right:1px solid #d0d0d0;box-shadow:inset 1px 0 #fff}
.r{height:21px;width:424px;border:solid #ededed;border-width:0 1px 1px 0;line-height:20px}
.r span:first-child{letter-spacing:-.03px}`,
`<x-header style="height:25px;padding-right:3px">.: Data<x-tool kind="down"></x-tool></x-header><div class="m"><div class="l"><div class="strip"><x-tab active closable style="width:130px;padding-right:11px">depthmean_annual</x-tab><x-tab closable style="width:221px;padding-right:8px;letter-spacing:-.04px">larctogadusborisovi20111111095449086</x-tab></div><div class="g"></div>
<div class="h"><span>fid</span><span>depth_fid</span><span>csquarecode</span><span>DepthMean</span></div>
${[['166627','7607:488:1','18.0'],['166628','7607:488:2','6.0'],['166629','7607:488:3','32.0'],['166630','7607:488:4','11.0'],['166631','7607:489:1','14.0'],['166633','7607:489:3','20.0']].map(r => `<div class="r"><span>depthmean_annual.fid-375f0896_</span>${r.map(c => `<span>${c}</span>`).join('')}</div>`).join('')}</div>
<x-scroll thumb="73" style="height:173px"></x-scroll></div>`);

define('eco-window', `
:host{width:1000px;height:760px;border:1px solid #8fa9ca;border-radius:3px 3px 2px 2px;background:rgba(197,212,232,.93);box-shadow:1px 2px 5px rgba(0,0,0,.55);display:flex;flex-direction:column;overflow:visible}
.h{height:25px;background:linear-gradient(#dfe9f6,#cadbf3 50%,#c6d8f2);border-bottom:1px solid #99bbe8;display:grid;grid-template-columns:298px 6px 1fr;font-weight:bold;color:#15428b;flex:none;box-shadow:inset 0 1px #f2f7fd}
.h div{display:flex;align-items:center;padding:0 5px;position:relative}
.g{color:#b1c8e6}
.h em{position:absolute;left:5px;top:7px;font-style:normal;color:#b9cdea}
.h b{position:relative;margin-top:-5px}
.b{display:flex;background:#dfe8f6;height:497px;width:993px;border-right:1px solid #99bbe8;flex:none}
.map{margin-left:6px;width:680px;border:1px solid #99bbe8;border-top:0;background:#fff;height:497px}
.d{background:#dfe8f6;width:993px;border-right:1px solid #99bbe8;padding-top:5px;height:205px;flex:none}
.f{margin-left:5px;width:988px;height:26px;background:#dfe8f6;border:1px solid #99bbe8;border-top:0;flex:none}`,
`<div class="h"><div><em>.: Layers</em><b>GIS Viewer 1.3</b><x-tool kind="left" style="margin-left:auto;opacity:.5;margin-right:-1px"></x-tool></div><div style="background:#cfdded;border-left:1px solid #dde8f6"></div><div class="g">.: Map<x-tool kind="max" style="margin:-3px 2px 0 auto"></x-tool><x-tool kind="close" style="margin-top:-3px"></x-tool></div></div>
<div class="b"><eco-layers></eco-layers><div class="map"><eco-maptools></eco-maptools><eco-map></eco-map></div></div>
<div class="d"><eco-data></eco-data></div><div class="f"></div>`);

/* ---------- page ---------- */
define('eco-page', `
:host{width:1904px;height:822px;overflow:hidden;position:relative;background:#fff}
.main{margin:15px 24px 0 25px;height:709px;display:flex;flex-direction:column}
.strip{height:23px;background:linear-gradient(#dfe8f6,#cad9ee);border-bottom:1px solid #8db2e3;display:flex;gap:2px;padding:1px 0 0 2px;flex:none}
.sp{height:4px;background:#dfe8f6;border-bottom:2px solid #99bbe8;border-top:1px solid #deecfd;flex:none}
.body{flex:1;background:#dfe8f6;border:1px solid #99bbe8;border-top:0;display:flex;padding:6px 6px 5px 5px;border-radius:0 0 2px 2px;box-shadow:inset 1px 0 #f4f8fe,inset -1px 0 #f4f8fe,inset 0 -1px #f4f8fe}
.L{width:1014px;border:1px solid #99bbe8;border-bottom:0;border-radius:2px 0 0 0;display:flex;flex-direction:column}
.L eco-objects{margin:6px 5px 0 5px}
.R{flex:1;border:1px solid #99bbe8;border-bottom:0;border-radius:0 2px 0 0;display:flex;flex-direction:column}
.R eco-details{margin:6px 4px 5px 4px}
.e{flex:1;display:flex;justify-content:flex-end;padding:6px 5px 0 0}
.bar{height:25px;margin:0 4px 5px;border:1px solid #99bbe8;border-top-color:#e8f0fa;background:linear-gradient(#d8e4f3,#cfdef0);color:#444;line-height:21px;padding-left:8px;display:flex;gap:9px}
eco-window{position:absolute;left:460px;top:31px}`,
`<eco-top></eco-top><eco-nav></eco-nav>
<div class="main"><div class="strip"><x-tab style="width:106px">Species Selection</x-tab><x-tab style="width:104px">Maps Generation</x-tab><x-tab active style="width:147px">View AquaMaps Results</x-tab></div><div class="sp"></div>
<div class="body"><div class="L"><x-header style="height:22px">Submitted AquaMaps Objects</x-header><eco-objects></eco-objects></div>
<div class="R"><x-header style="height:24px;padding-right:5px"><x-tool kind="up"></x-tool></x-header><eco-details></eco-details><x-header style="height:24px;border-top:2px solid #99bbe8"></x-header><div class="e"><x-scroll thumb="200" style="height:310px"></x-scroll></div><div class="bar"><span>Additional Details</span><span>GIS Viewer</span></div></div></div></div>
<eco-window></eco-window>`);
</script>
</body>
</html>
